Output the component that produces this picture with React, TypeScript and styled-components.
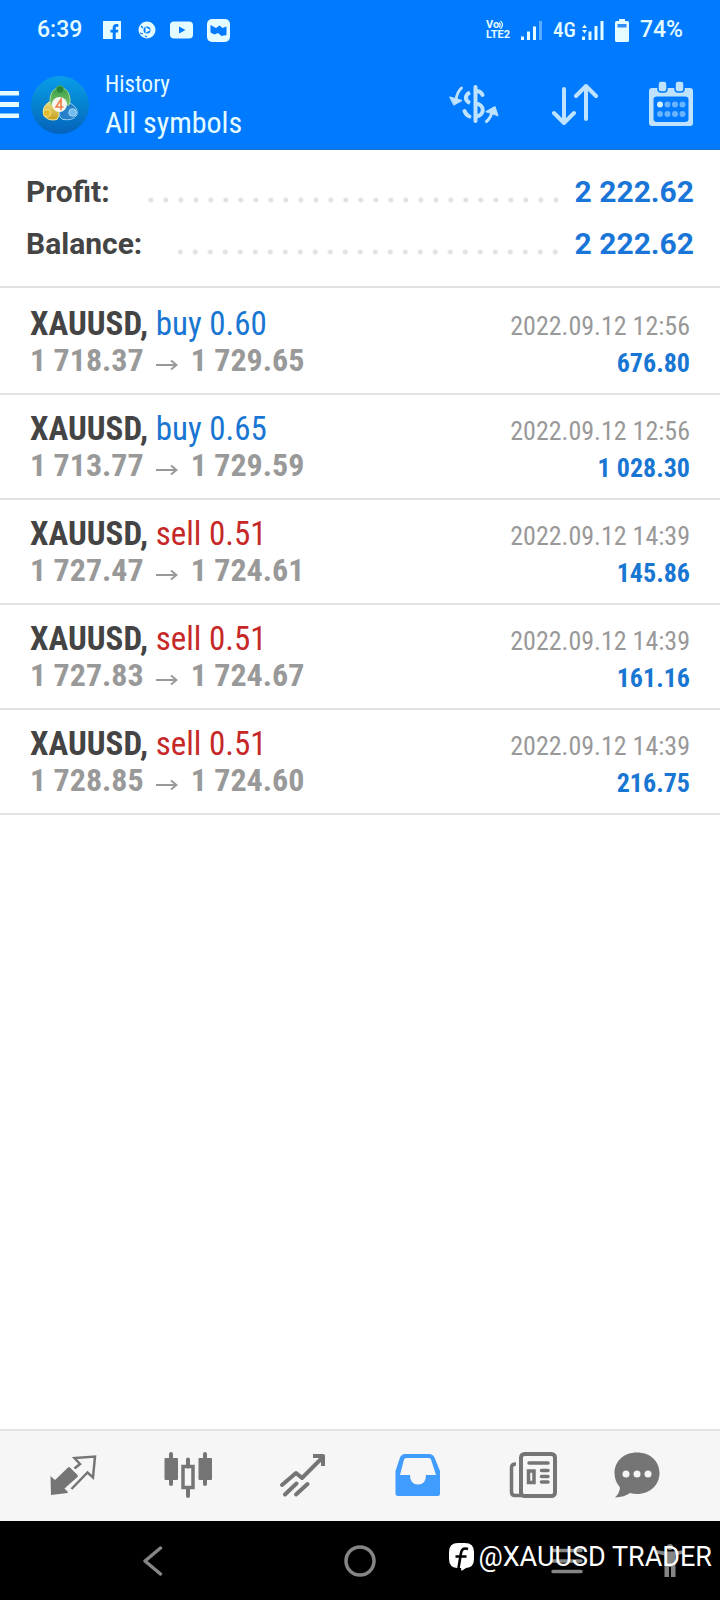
import React from 'react';
import styled, { createGlobalStyle } from 'styled-components';

const condensed = '"Roboto Condensed", Roboto, sans-serif';

const GlobalStyle = createGlobalStyle`
  * { box-sizing: border-box; }
  body {
    margin: 0;
    background: #fff;
    font-family: Roboto, sans-serif;
  }
  h1, h2, p, dl, dt, dd, ul { margin: 0; padding: 0; }
  svg { display: block; flex: none; }
`;

const Screen = styled.div`
  display: flex;
  flex-direction: column;
  min-height: 100vh;
`;

const Top = styled.div`
  background: #007aff;
  color: #e4fbff;
  border-bottom: 1px solid #1b6fc4;
`;

const StatusBar = styled.div`
  display: flex;
  align-items: center;
  justify-content: space-between;
  height: 60px;
  padding: 0 37px;
`;

const StatusGroup = styled.div<{ $gap: number }>`
  display: flex;
  align-items: center;
  gap: ${(p) => p.$gap}px;
`;

const StatusText = styled.span`
  font-size: 23px;
  line-height: 28px;
  font-weight: 500;
`;

const NetworkText = styled.span`
  font-family: ${condensed};
  font-size: 21px;
  line-height: 28px;
  font-weight: 500;
`;

const LteBadge = styled.span`
  display: flex;
  flex-direction: column;
  font-size: 11px;
  line-height: 10px;
  font-weight: 700;
`;

const LteTop = styled.span`
  display: flex;
  align-items: center;
`;

const StatusIcons = styled.div`
  display: flex;
  align-items: center;
  gap: 14px;
  margin-left: 6px;
`;

const AppBar = styled.header`
  display: flex;
  align-items: center;
  height: 89px;
  padding-right: 27px;
`;

const IconButton = styled.button`
  display: flex;
  align-items: center;
  justify-content: center;
  padding: 0;
  border: 0;
  background: none;
  color: inherit;
`;

const MenuButton = styled(IconButton)`
  width: 30px;
  height: 60px;
  justify-content: flex-start;
`;

const Titles = styled.div`
  flex: 1;
  margin-left: 15px;
  font-family: ${condensed};
`;

const Title = styled.h1`
  font-size: 23px;
  line-height: 36px;
  font-weight: 400;
`;

const Subtitle = styled.p`
  font-size: 30px;
  line-height: 40px;
`;

const Actions = styled.div`
  display: flex;
  align-items: center;
  gap: 51px;
  padding-bottom: 2px;
  color: #bfe3ff;
`;

const Summary = styled.dl`
  padding: 16px 26px;
  border-bottom: 2px solid #e2e2e2;
  font-size: 30px;
  line-height: 52px;
`;

const SummaryLine = styled.div`
  display: flex;
`;

const SummaryLabel = styled.dt`
  color: #444;
  font-weight: 700;
`;

const Leader = styled.span`
  flex: 1;
  margin: 0 12px 0 36px;
  background: radial-gradient(circle at 8px 34px, #e2e2e2 2px, transparent 3px) right top / 15px 52px repeat-x;
`;

const SummaryValue = styled.dd`
  color: #1976d8;
  font-weight: 700;
`;

const Deals = styled.ul`
  flex: 1;
  padding-top: 2px;
  list-style: none;
  font-family: ${condensed};
`;

const Deal = styled.li`
  display: flex;
  justify-content: space-between;
  height: 105px;
  padding: 15px 30px 0;
  border-bottom: 2px solid #e2e2e2;
`;

const DealSide = styled.div<{ $end?: boolean }>`
  font-size: ${(p) => (p.$end ? 26 : 33)}px;
  line-height: 37px;
  text-align: ${(p) => (p.$end ? 'right' : 'left')};
  padding-top: ${(p) => (p.$end ? 3 : 0)}px;
`;

const Symbol = styled.strong`
  color: #444;
`;

const Action = styled.span<{ $kind: 'buy' | 'sell' }>`
  color: ${(p) => (p.$kind === 'buy' ? '#1976d2' : '#c62828')};
`;

const Prices = styled.p`
  display: flex;
  align-items: center;
  color: #999;
  font-size: 32px;
  font-weight: 700;
`;

const DealTime = styled.p`
  color: #999;
`;

const DealProfit = styled.p`
  color: #1976d2;
  font-weight: 700;
`;

const TabBar = styled.nav`
  display: grid;
  grid-template-columns: repeat(6, 1fr);
  height: 92px;
  padding: 0 15px 2px;
  border-top: 2px solid #e4e4e4;
  background: #f6f6f6;
`;

const Tab = styled(IconButton)<{ $active?: boolean }>`
  color: ${(p) => (p.$active ? '#409cff' : '#757575')};
`;

const SystemBar = styled.div`
  position: relative;
  display: flex;
  align-items: center;
  gap: 73px;
  height: 79px;
  padding: 0 36px 0 143px;
  background: #000;
  color: #858585;
`;

const SystemKeys = styled.div`
  flex: 1;
  display: flex;
  align-items: center;
  justify-content: space-between;
`;

const Handle = styled.p`
  position: absolute;
  right: 8px;
  top: 17px;
  display: flex;
  align-items: center;
  gap: 4px;
  color: #fff;
  font-size: 27px;
  line-height: 38px;
`;

const FacebookIcon = () => (
  <svg width="18" height="18" viewBox="0 0 18 18" fill="currentColor">
    <path d="M0 0h18v18h-5.300v-6.600h2.200l.4-2.700h-2.600V7.100c0-.9.4-1.400 1.400-1.400h1.300V3.200c-3.800-.7-5.700.7-5.700 3.500v2H7.400v2.700h2.300V18H0z" />
  </svg>
);

const PlayDotIcon = () => (
  <svg width="21" height="18" viewBox="-3 0 21 18" fill="none" stroke="currentColor">
    <circle cx="9" cy="9" r="6" strokeWidth="5" />
    <path d="M3 5l2 2M2 12l3 1M7 15l2 1" stroke="#007aff" strokeWidth="1.200" />
    <path d="M7.500 6l5 3-5 3z" fill="currentColor" stroke="none" />
  </svg>
);

const YoutubeIcon = () => (
  <svg width="23" height="18" viewBox="0 0 23 18">
    <rect width="23" height="17" y=".5" rx="4" fill="currentColor" />
    <path d="M9 5.500l6.500 3.500L9 12.500z" fill="#007aff" />
  </svg>
);

const RibbonIcon = () => (
  <svg width="23" height="23" viewBox="0 0 23 23">
    <rect width="23" height="23" rx="5" fill="currentColor" />
    <path d="M3.500 6l5.500 3 3.500-2.500 3 2.500 4-1.500v8.500l-5 1-3.500-3-3.500 1.500-4-2z" fill="#007aff" />
  </svg>
);

const WavesIcon = () => (
  <svg width="6" height="10" viewBox="0 0 6 10" fill="none" stroke="currentColor" strokeWidth="1.200">
    <path d="M0 2.500q2.500 2.500 0 5M1.500 .8q4 4 0 8" />
  </svg>
);

const SignalIcon = () => (
  <svg width="21" height="19" viewBox="0 0 21 19" fill="currentColor">
    <path d="M0 15.500h3V19H0zM6 10.500h3V19H6zM12 5.500h3V19h-3z" />
    <path d="M18 0h3v19h-3z" opacity=".4" />
  </svg>
);

const DataSignalIcon = () => (
  <svg width="22" height="19" viewBox="0 0 22 19" fill="currentColor">
    <path d="M0 15.500h3V19H0zM6.500 10.500h3V19h-3zM12.500 5h3v14h-3zM18.500 0h3v19h-3zM0 7l2.500-3.500L5 7zM0 9h5l-2.500 3.500z" />
  </svg>
);

const BatteryIcon = () => (
  <svg width="14" height="23" viewBox="0 0 14 23">
    <path d="M4 0h6v2h2.500Q14 2 14 3.500v18q0 1.500-1.500 1.500h-11Q0 23 0 21.500v-18Q0 2 1.500 2H4z" fill="currentColor" />
    <path d="M2.500 5h9v3.500h-9z" fill="#2f8ef5" />
  </svg>
);

const MenuIcon = () => (
  <svg width="19" height="27" viewBox="0 0 19 27" fill="currentColor">
    <path d="M0 0h19v4.500H0zM0 11h19v5H0zM0 22.500h19V27H0z" />
  </svg>
);

const AppLogo = () => (
  <svg width="60" height="60" viewBox="0 0 60 60" role="img" aria-label="Trading app">
    <defs>
      <linearGradient id="sky" x1="0" y1="0" x2="0" y2="1">
        <stop offset="0" stopColor="#0a9de8" />
        <stop offset=".55" stopColor="#0480cc" />
        <stop offset="1" stopColor="#0562bc" />
      </linearGradient>
      <linearGradient id="leaf" x1="0" y1="0" x2="0" y2="1">
        <stop offset="0" stopColor="#2f9a45" />
        <stop offset="1" stopColor="#7cc46a" />
      </linearGradient>
      <linearGradient id="gold" x1="0" y1="0" x2="0" y2="1">
        <stop offset="0" stopColor="#e8dc80" />
        <stop offset="1" stopColor="#c79f1c" />
      </linearGradient>
    </defs>
    <circle cx="30" cy="30" r="29" fill="url(#sky)" />
    <path d="M19 27q8 0 10 8 1 6-2 9.500-9 2-13-4-3-8 5-13.500z" fill="url(#gold)" stroke="#f1e79a" strokeWidth="1" />
    <path d="M40 28q9 5 7 12-4 6-14 4.500-5-2-3-9 3-7 10-7.500z" fill="#2a7fc9" stroke="#8fcdf2" strokeWidth="1" />
    <path d="M30 12q8 2 9.500 9 1.500 5-.5 9H21q-2-4-.5-9 1.500-7 9.500-9z" fill="url(#leaf)" stroke="#a5d890" strokeWidth="1" />
    <circle cx="30" cy="14.500" r="3.800" fill="#26853a" stroke="#5aad58" strokeWidth=".8" />
    <circle cx="17" cy="38" r="3.800" fill="#e3bb2c" stroke="#f8ea95" strokeWidth=".8" />
    <circle cx="42.500" cy="37.500" r="3.800" fill="#6fbdf0" stroke="#b5e2fa" strokeWidth=".8" />
    <circle cx="29.500" cy="29.500" r="7.500" fill="#f7f6f0" />
    <path d="M31 35V24.500L26 32h7.500" fill="none" stroke="#ef7f45" strokeWidth="1.600" />
  </svg>
);

const CurrencyIcon = () => (
  <svg width="50" height="40" viewBox="0 0 50 40" fill="none" stroke="currentColor" strokeWidth="4" strokeLinecap="round">
    <path d="M26.500 3v34" />
    <path d="M27 7c3 0 5.500 1.500 6.500 4" />
    <path d="M21 8.500c-5.500 2.500-5.500 8 0 10.500" strokeLinecap="butt" />
    <path d="M15.500 27c1 2.500 2.500 4.500 5 5.500" />
    <path d="M27 19.500c9 1.500 9 11.500 0 13" />
    <path d="M12.500 4Q8 8 7 16" strokeWidth="3" />
    <path d="M1 13l12 3.500-8 4.500z" fill="currentColor" strokeWidth="1" strokeLinejoin="round" />
    <path d="M37.500 37.500q5-4 5.500-11" strokeWidth="3" />
    <path d="M37 27.500l9-5 3 9z" fill="currentColor" strokeWidth="1" strokeLinejoin="round" />
  </svg>
);

const SortIcon = () => (
  <svg width="48" height="42" viewBox="-2 0 48 42" fill="none" stroke="currentColor" strokeWidth="4" strokeLinecap="round" strokeLinejoin="round">
    <path d="M12 6v34M2 30l10 10 10-10M34 36V3M24 13L34 3l10 10" />
  </svg>
);

const CalendarIcon = () => (
  <svg width="44" height="46" viewBox="0 0 44 46">
    <path
      fillRule="evenodd"
      fill="currentColor"
      d="M3 7h38q3 0 3 3v32q0 3-3 3H3q-3 0-3-3V10q0-3 3-3zM8 15.500q-3.500 0-3.500 3V38q0 3 3.500 3h28q3.500 0 3.500-3V18.500q0-3-3.500-3z"
    />
    <rect x="9" y="0" width="9" height="11" rx="3" fill="currentColor" stroke="#007aff" strokeWidth="1.500" />
    <rect x="26" y="0" width="9" height="11" rx="3" fill="currentColor" stroke="#007aff" strokeWidth="1.500" />
    <g fill="#6bb4ff">
      <circle cx="11" cy="23.500" r="3" fill="#d5f1ff" />
      <circle cx="18.500" cy="23.500" r="3" />
      <circle cx="26" cy="23.500" r="3" />
      <circle cx="33.500" cy="23.500" r="3" />
      <circle cx="11" cy="33" r="3" />
      <circle cx="18.500" cy="33" r="3" />
      <circle cx="26" cy="33" r="3" />
      <circle cx="33.500" cy="33" r="3" />
    </g>
  </svg>
);

const PriceArrow = styled.svg.attrs({
  width: 22,
  height: 12,
  viewBox: '0 0 22 12',
  fill: 'none',
  stroke: 'currentColor',
  strokeWidth: 2,
  role: 'img',
  'aria-label': 'to',
})`
  margin: 8px 13px 0 12px;
`;

const QuotesIcon = () => (
  <svg width="48" height="48" viewBox="0 0 48 48" fill="none" stroke="currentColor" strokeWidth="2.500">
    <path d="M1.500 25l4.500 4L19 16.500q1-1 2 0l7.500 7.500q1 1 0 2L15.500 37.500l3.500 3.500-.5 1L2 44z" fill="currentColor" stroke="none" />
    <path d="M25.500 17.500L31 13l-5.500-6L46 5.500l-2 21-5.500-5L22.500 38" />
  </svg>
);

const ChartIcon = () => (
  <svg width="48" height="48" viewBox="0 0 48 48" fill="none" stroke="currentColor" strokeWidth="4" strokeLinecap="round">
    <path d="M7 3v30M41 3v30M24 8.500v7M24 37v8" />
    <rect x=".5" y="7" width="13.500" height="22" rx="1" fill="currentColor" stroke="none" />
    <rect x="34.500" y="7" width="13.500" height="22" rx="1" fill="currentColor" stroke="none" />
    <rect x="19" y="15.500" width="10" height="21" strokeWidth="3.500" />
  </svg>
);

const TradeIcon = () => (
  <svg width="48" height="48" viewBox="0 0 48 48" fill="none" stroke="currentColor" strokeWidth="4">
    <path d="M3 34l14-12 6 5L44 6" strokeLinecap="round" strokeLinejoin="round" />
    <path d="M34 5h10v10" strokeLinejoin="round" />
    <path d="M6 43.500l11.500-11M17 43.500l11.500-10.500" strokeLinecap="round" />
  </svg>
);

const HistoryIcon = () => (
  <svg width="48" height="48" viewBox="0 0 48 48" fill="currentColor">
    <path
      fillRule="evenodd"
      d="M11 3h24q4 0 5.500 3.500L46 20v22.500q0 2.500-2.500 2.500h-39Q1.500 45 1.500 42.500V20L6 6.500Q7.500 3 11 3zM12 7q-1.500 0-2 1.500L6 24h10q0 9.500 8 9.500T32 24h10L37 8.500Q36.500 7 35 7z"
    />
  </svg>
);

const NewsIcon = () => (
  <svg width="48" height="48" viewBox="0 0 48 48" fill="none" stroke="currentColor" strokeWidth="3.500">
    <path d="M12.500 44.500H6Q2.500 44.500 2.500 41V16.500Q2.500 13 7 13" />
    <rect x="12" y="3" width="34" height="42" rx="3.500" strokeWidth="4" />
    <path d="M20 12h19M32.500 19.500H39M32.500 25.500H39M32.500 31H39" strokeLinecap="round" />
    <rect x="19.500" y="20" width="5.500" height="11.500" />
  </svg>
);

const ChatIcon = () => (
  <svg width="70" height="48" viewBox="0 0 70 48">
    <path d="M24 1.500c13 0 22.500 8.500 22.500 20.500S37 43 24 43q-3.500 0-7-1-5.500 4-15 4.500 4.500-4 5-10Q1.500 30 1.500 22C1.500 10 11 1.500 24 1.500z" fill="currentColor" />
    <g fill="#f6f6f6">
      <circle cx="13" cy="23" r="3.500" />
      <circle cx="24" cy="23" r="3.500" />
      <circle cx="35" cy="23" r="3.500" />
    </g>
  </svg>
);

const BackIcon = () => (
  <svg width="26" height="30" viewBox="0 0 26 30" fill="none" stroke="currentColor" strokeWidth="3.500" strokeLinecap="round" strokeLinejoin="round">
    <path d="M17.500 2L2 15l15.500 13" />
  </svg>
);

const HomeIcon = () => (
  <svg width="32" height="32" viewBox="0 0 32 32" fill="none" stroke="currentColor" strokeWidth="3.500">
    <circle cx="16" cy="16" r="14" />
  </svg>
);

const RecentsIcon = () => (
  <svg width="32" height="26" viewBox="0 0 32 26" stroke="currentColor" strokeWidth="3.500" strokeLinecap="round">
    <path d="M2 2.500h28M2 13h28M2 23.500h28" />
  </svg>
);

const PersonIcon = () => (
  <svg width="28" height="34" viewBox="0 0 28 34" fill="currentColor">
    <circle cx="14" cy="3" r="3" />
    <path d="M0 6q14 3 28 0v3.500l-8.500 2V33h-4.500V23h-2v10H8.500V11.500L0 9.500z" />
  </svg>
);

const HandleLogo = () => (
  <svg width="25" height="28" viewBox="0 0 25 28">
    <path d="M9 0h7q9 0 9 9v7q0 8.500-8 9l-4.500 3-.5-3H9q-9 0-9-9V9q0-9 9-9z" fill="#fff" />
    <path d="M19 6q-6-2-7 4l-2.500 15M6.500 13.500h11" fill="none" stroke="#000" strokeWidth="2.600" />
  </svg>
);

const summary = [
  { label: 'Profit:', value: '2 222.62' },
  { label: 'Balance:', value: '2 222.62' },
];

type DealData = { kind: 'buy' | 'sell'; volume: string; open: string; close: string; time: string; profit: string };

const deals: DealData[] = [
  { kind: 'buy', volume: '0.60', open: '1 718.37', close: '1 729.65', time: '2022.09.12 12:56', profit: '676.80' },
  { kind: 'buy', volume: '0.65', open: '1 713.77', close: '1 729.59', time: '2022.09.12 12:56', profit: '1 028.30' },
  { kind: 'sell', volume: '0.51', open: '1 727.47', close: '1 724.61', time: '2022.09.12 14:39', profit: '145.86' },
  { kind: 'sell', volume: '0.51', open: '1 727.83', close: '1 724.67', time: '2022.09.12 14:39', profit: '161.16' },
  { kind: 'sell', volume: '0.51', open: '1 728.85', close: '1 724.60', time: '2022.09.12 14:39', profit: '216.75' },
];

const tabs = [
  { name: 'Quotes', icon: <QuotesIcon /> },
  { name: 'Chart', icon: <ChartIcon /> },
  { name: 'Trade', icon: <TradeIcon /> },
  { name: 'History', icon: <HistoryIcon />, active: true },
  { name: 'News', icon: <NewsIcon /> },
  { name: 'Messages', icon: <ChatIcon /> },
];

export default function App() {
  return (
    <Screen>
      <GlobalStyle />
      <Top>
        <StatusBar>
          <StatusGroup $gap={15}>
            <StatusText>6:39</StatusText>
            <StatusIcons>
              <FacebookIcon />
              <PlayDotIcon />
              <YoutubeIcon />
              <RibbonIcon />
            </StatusIcons>
          </StatusGroup>
          <StatusGroup $gap={11}>
            <LteBadge>
              <LteTop>
                Vo
                <WavesIcon />
              </LteTop>
              <span>LTE2</span>
            </LteBadge>
            <SignalIcon />
            <StatusGroup $gap={6}>
              <NetworkText>4G</NetworkText>
              <DataSignalIcon />
            </StatusGroup>
            <BatteryIcon />
            <StatusText>74%</StatusText>
          </StatusGroup>
        </StatusBar>
        <AppBar>
          <MenuButton aria-label="Menu">
            <MenuIcon />
          </MenuButton>
          <AppLogo />
          <Titles>
            <Title>History</Title>
            <Subtitle>All symbols</Subtitle>
          </Titles>
          <Actions>
            <IconButton aria-label="Currency">
              <CurrencyIcon />
            </IconButton>
            <IconButton aria-label="Sort">
              <SortIcon />
            </IconButton>
            <IconButton aria-label="Period">
              <CalendarIcon />
            </IconButton>
          </Actions>
        </AppBar>
      </Top>
      <Summary>
        {summary.map((s) => (
          <SummaryLine key={s.label}>
            <SummaryLabel>{s.label}</SummaryLabel>
            <Leader />
            <SummaryValue>{s.value}</SummaryValue>
          </SummaryLine>
        ))}
      </Summary>
      <Deals>
        {deals.map((d) => (
          <Deal key={d.open}>
            <DealSide>
              <p>
                <Symbol>XAUUSD,</Symbol>{' '}
                <Action $kind={d.kind}>
                  {d.kind} {d.volume}
                </Action>
              </p>
              <Prices>
                {d.open}
                <PriceArrow>
                  <path d="M0 6h20M15 1.500L20.500 6 15 10.500" />
                </PriceArrow>
                {d.close}
              </Prices>
            </DealSide>
            <DealSide $end>
              <DealTime>{d.time}</DealTime>
              <DealProfit>{d.profit}</DealProfit>
            </DealSide>
          </Deal>
        ))}
      </Deals>
      <TabBar>
        {tabs.map((t) => (
          <Tab key={t.name} aria-label={t.name} $active={t.active}>
            {t.icon}
          </Tab>
        ))}
      </TabBar>
      <SystemBar>
        <SystemKeys>
          <IconButton aria-label="Back">
            <BackIcon />
          </IconButton>
          <IconButton aria-label="Home">
            <HomeIcon />
          </IconButton>
          <IconButton aria-label="Recent apps">
            <RecentsIcon />
          </IconButton>
        </SystemKeys>
        <IconButton aria-label="Accessibility">
          <PersonIcon />
        </IconButton>
        <Handle>
          <HandleLogo />
          @XAUUSD TRADER
        </Handle>
      </SystemBar>
    </Screen>
  );
}
